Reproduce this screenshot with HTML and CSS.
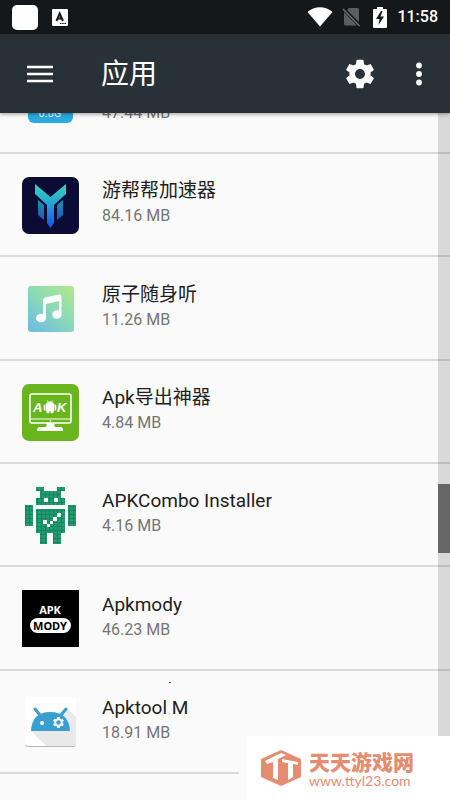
FILE: index.html
```
<!DOCTYPE html>
<html lang="zh-CN">
<head>
    <meta charset="UTF-8">
    <meta name="viewport" content="width=device-width, initial-scale=1.0">
    <title>应用</title>
    <link rel="stylesheet" href="styles.css">
</head>
<body>

    <div class="status-bar">
        <div class="notifications">
            <span class="blank-notice"></span>
            <svg width="16" height="17" viewBox="0 0 16 17">
                <rect width="16" height="17" rx="1" fill="#fff"/>
                <path d="M4.5 12L7.7 4.5L11 12M5.5 9.5H10" fill="none" stroke="#15191c" stroke-width="2"/>
                <path d="M8 14.5H14" stroke="#15191c" stroke-dasharray="1.5 .7"/>
            </svg>
        </div>
        <div class="indicators">
            <svg width="26" height="20" viewBox="0 0 26 20">
                <path d="M0.5 5C7-1.3 19-1.3 25.5 5L13 19.5Z" fill="#fff"/>
            </svg>
            <svg class="no-sim" width="18" height="20" viewBox="0 0 18 20">
                <path d="M7 1H15.5Q17 1 17 2.500V15L5 3ZM2 5L15 18.500H3.500Q2 18.500 2 17Z" fill="#5b5e60"/>
                <path d="M1 2L17.500 19" stroke="#6c6f71" stroke-width="1.5"/>
            </svg>
            <svg class="battery" width="14" height="21" viewBox="0 0 14 21">
                <path d="M4 0H10V2H13Q14 2 14 3V20Q14 21 13 21H1Q0 21 0 20V3Q0 2 1 2H4Z" fill="#fff"/>
                <path d="M8 4L3 12H6.500L5.500 18L11 9.500H7.500L9.500 4Z" fill="#15191c"/>
            </svg>
            <span class="clock">11:58</span>
        </div>
    </div>

    <header class="toolbar">
        <button class="icon-btn" aria-label="菜单">
            <svg width="26" height="18" viewBox="0 0 26 18">
                <path d="M0 2H26M0 9H26M0 16H26" stroke="#fff" stroke-width="2.600"/>
            </svg>
        </button>
        <h1>应用</h1>
        <button class="icon-btn settings-btn" aria-label="设置">
            <svg width="34" height="34" viewBox="0 0 24 24">
                <path fill="#fff" d="M19.430 12.980c.04-.32.07-.64.07-.98s-.03-.66-.07-.98l2.110-1.650c.19-.15.24-.42.12-.64l-2-3.460c-.12-.22-.39-.3-.61-.22l-2.490 1c-.52-.4-1.080-.73-1.690-.98l-.38-2.650C14.460 2.180 14.250 2 14 2h-4c-.25 0-.46.18-.49.42l-.38 2.650c-.61.25-1.170.59-1.690.98l-2.490-1c-.23-.09-.49 0-.61.22l-2 3.460c-.13.22-.07.49.12.64l2.110 1.650c-.04.32-.07.65-.07.98s.03.66.07.98l-2.110 1.650c-.19.15-.24.42-.12.64l2 3.460c.12.22.39.3.61.22l2.490-1c.52.4 1.080.73 1.690.98l.38 2.650c.03.24.24.42.49.42h4c.25 0 .46-.18.49-.42l.38-2.650c.61-.25 1.170-.59 1.690-.98l2.490 1c.23.09.49 0 .61-.22l2-3.460c.12-.22.07-.49-.12-.64l-2.110-1.650zM12 15.500c-1.930 0-3.500-1.570-3.500-3.500s1.570-3.500 3.500-3.500 3.500 1.570 3.500 3.500-1.570 3.500-3.500 3.500z"/>
            </svg>
        </button>
        <button class="icon-btn" aria-label="更多">
            <svg width="6" height="24" viewBox="0 0 6 24">
                <g fill="#fff"><circle cx="3" cy="3.500" r="2.900"/><circle cx="3" cy="12" r="2.900"/><circle cx="3" cy="20.500" r="2.900"/></g>
            </svg>
        </button>
    </header>

    <main class="content">
        <ul class="app-list">
            <li class="app">
                <svg class="app-icon" viewBox="0 0 57 57">
                    <rect x="6" y="4" width="45" height="45" rx="6" fill="#29aae3"/>
                    <text x="28" y="43" text-anchor="middle" class="speed-text">0.0G</text>
                </svg>
                <div class="app-info">
                    <div class="app-name">&nbsp;</div>
                    <div class="app-size">47.44 MB</div>
                </div>
            </li>
            <li class="app">
                <svg class="app-icon" viewBox="0 0 57 57">
                    <defs>
                        <linearGradient id="boost" x1="0" y1="7" x2="0" y2="51" gradientUnits="userSpaceOnUse">
                            <stop offset="0" stop-color="#35d5bc"/>
                            <stop offset=".5" stop-color="#249dd5"/>
                            <stop offset="1" stop-color="#174ee0"/>
                        </linearGradient>
                    </defs>
                    <rect width="57" height="57" rx="7" fill="#0c0b35"/>
                    <g fill="url(#boost)">
                        <path d="M13 7L28.500 20L44 7V17L32 28V46L28.500 51L25 46V28L13 17Z"/>
                        <path d="M16 23L22 28V43L16 38ZM41 23L35 28V43L41 38Z" opacity=".8"/>
                    </g>
                </svg>
                <div class="app-info">
                    <div class="app-name">游帮帮加速器</div>
                    <div class="app-size">84.16 MB</div>
                </div>
            </li>
            <li class="app">
                <svg class="app-icon" viewBox="0 0 57 57">
                    <defs>
                        <linearGradient id="music" x1="1" y1="0" x2=".2" y2="1">
                            <stop offset="0" stop-color="#b5e88d"/>
                            <stop offset=".5" stop-color="#8bdbb4"/>
                            <stop offset="1" stop-color="#72bfe2"/>
                        </linearGradient>
                    </defs>
                    <rect x="6" y="6" width="46" height="46" rx="3" fill="url(#music)"/>
                    <g fill="#fff">
                        <path d="M21 20Q21 18 23 17.500L37 14.500Q39.500 14 39.500 16V34H37V21L24 24V38H21Z"/>
                        <ellipse cx="19" cy="38" rx="5" ry="4.300"/>
                        <ellipse cx="35" cy="34.500" rx="4.800" ry="4.200"/>
                    </g>
                </svg>
                <div class="app-info">
                    <div class="app-name">原子随身听</div>
                    <div class="app-size">11.26 MB</div>
                </div>
            </li>
            <li class="app">
                <svg class="app-icon" viewBox="0 0 57 57">
                    <rect width="57" height="57" rx="7" fill="#68b51c"/>
                    <rect x="8" y="10" width="41" height="29" rx="2" fill="none" stroke="#fff" stroke-width="1.500"/>
                    <path d="M8 35H49" stroke="#fff"/>
                    <path d="M25 39H32L33 43H39Q41 43 41 47H15Q15 43 18 43H24Z" fill="#fff"/>
                    <circle cx="28.500" cy="37" r=".8" fill="#fff"/>
                    <text x="11" y="28" class="export-text">A</text>
                    <text x="35" y="28" class="export-text">K</text>
                    <path d="M24 20Q28 15 32 20V27H31V29H29V27H27V29H25V27H24ZM22 21H23V26H22ZM33 21H34V26H33ZM25 16L26 18M31 16L30 18" fill="#fff" stroke="#fff" stroke-width=".6"/>
                </svg>
                <div class="app-info">
                    <div class="app-name">Apk导出神器</div>
                    <div class="app-size">4.84 MB</div>
                </div>
            </li>
            <li class="app">
                <svg class="app-icon" viewBox="0 0 57 57">
                    <defs>
                        <pattern id="pixels" x="0" y="0" width="4" height="4" patternUnits="userSpaceOnUse">
                            <rect width="4" height="4" fill="#11865c"/>
                            <rect width="3" height="3" fill="#259b71"/>
                        </pattern>
                    </defs>
                    <path fill="url(#pixels)" d="M14 0H22V4H35V0H43V4H39V11H43V18H14V11H18V4H14ZM3 18H11V39H3ZM46 18H54V39H46ZM14 22H43V46H39V57H31V46H25V57H18V46H14Z"/>
                    <path fill="#fff" d="M22 11H26V15H22ZM32 11H36V15H32ZM35 26H39V30H35ZM31 30H35V34H31ZM28 34H31V37H28ZM21 33H25V37H21ZM25 37H28V40H25Z"/>
                </svg>
                <div class="app-info">
                    <div class="app-name">APKCombo Installer</div>
                    <div class="app-size">4.16 MB</div>
                </div>
            </li>
            <li class="app">
                <svg class="app-icon" viewBox="0 0 57 57">
                    <rect width="57" height="57" fill="#000"/>
                    <text x="28" y="24" text-anchor="middle" class="mody-text" fill="#fff">APK</text>
                    <rect x="8" y="28" width="41" height="15" rx="7.500" fill="#fff"/>
                    <text x="28" y="40" text-anchor="middle" class="mody-text" fill="#000">MODY</text>
                </svg>
                <div class="app-info">
                    <div class="app-name">Apkmody</div>
                    <div class="app-size">46.23 MB</div>
                </div>
            </li>
            <li class="app">
                <svg class="app-icon" viewBox="0 0 57 57">
                    <rect x="3" y="4" width="51" height="49" rx="3" fill="#b9b9b9"/>
                    <rect x="3" y="3" width="51" height="49" rx="3" fill="#fff"/>
                    <path d="M9 37L24 52H51Q54 52 54 49V23L45 14Z" fill="#e9e9e9"/>
                    <path d="M9 37Q10 18 28 18Q47 18 48 37Z" fill="#389fd3"/>
                    <path d="M13 15L18 21M44 15L39 21" stroke="#389fd3" stroke-width="3" stroke-linecap="round"/>
                    <circle cx="20" cy="29" r="2" fill="#fff"/>
                    <circle cx="36.500" cy="28.500" r="3.300" fill="none" stroke="#fff" stroke-width="2"/>
                    <path d="M36.500 23V25M36.500 32V34M31.700 25.800L33.500 26.800M39.500 30.200L41.300 31.200M31.700 31.200L33.500 30.200M39.500 26.800L41.300 25.800" stroke="#fff" stroke-width="2.500"/>
                </svg>
                <div class="app-info">
                    <div class="app-name">Apktool M</div>
                    <div class="app-size">18.91 MB</div>
                </div>
            </li>
        </ul>
        <div class="scrollbar"><div class="thumb"></div></div>
        <span class="speck"></span>
    </main>

    <div class="watermark">
        <svg width="40" height="36" viewBox="0 0 40 36">
            <path d="M20 0L40 9V27L20 36L0 27V9Z" fill="#e68c70"/>
            <path d="M4 11L20 3L25 5L17 9V30L12 28V12L6 14Z" fill="#fff"/>
            <path d="M21 9L37 12V15L32 14V27L27 30V13L21 12Z" fill="#fff"/>
        </svg>
        <div class="site">
            <div class="site-name">天天游戏网</div>
            <div class="site-url">www.ttyl23.com</div>
        </div>
    </div>

</body>
</html>
```
FILE: styles.css
```
* {
    box-sizing: border-box;
}
body {
    font-family: Roboto, "Noto Sans CJK SC", sans-serif;
    background-color: #fafafa;
    color: #212121;
    margin: 0;
    height: 100vh;
    display: flex;
    flex-direction: column;
    overflow: hidden;
}
svg {
    display: block;
    flex-shrink: 0;
}
.status-bar {
    height: 34px;
    flex-shrink: 0;
    padding: 0 12px;
    display: flex;
    justify-content: space-between;
    align-items: center;
    background-color: #14181b;
}
.notifications, .indicators {
    display: flex;
    align-items: center;
}
.notifications {
    gap: 14px;
}
.blank-notice {
    width: 26px;
    height: 25px;
    border-radius: 5px;
    background-color: #fff;
}
.indicators {
    gap: 9px;
}
.battery {
    margin: 0 1px 0 4px;
}
.clock {
    color: #fff;
    font-size: 16px;
    font-weight: 500;
    line-height: 24px;
}
.toolbar {
    position: relative;
    z-index: 1;
    height: 79px;
    flex-shrink: 0;
    padding: 0 20px 0 19px;
    display: flex;
    align-items: center;
    background-color: #293138;
    box-shadow: 0 1px 4px rgba(0, 0, 0, 0.4);
}
.toolbar h1 {
    flex: 1;
    margin: 0 0 0 40px;
    padding-top: 2px;
    color: #fff;
    font-size: 28px;
    font-weight: 400;
    line-height: 40px;
}
.icon-btn {
    padding: 8px;
    border: none;
    background: none;
    cursor: pointer;
}
.settings-btn {
    margin-right: 23px;
}
.content {
    position: relative;
    flex: 1;
    min-height: 0;
    overflow: hidden;
}
/* list is scrolled part way past its first row */
.app-list {
    list-style: none;
    margin: -62px 0 0;
    padding: 0;
}
.app {
    height: 103px;
    padding: 1px 22px 0;
    display: flex;
    align-items: center;
    gap: 23px;
    border-bottom: 2px solid #dadada;
}
.app:nth-child(3n) {
    height: 104px;
}
.app-icon {
    width: 57px;
    height: 57px;
}
.app-info {
    padding-bottom: 4px;
}
.app-name {
    font-size: 19px;
    line-height: 26px;
}
.app-size {
    color: #757575;
    font-size: 16px;
    line-height: 24px;
}
.speed-text {
    font-size: 11px;
    fill: #fff;
}
.export-text {
    font-family: "Liberation Sans", sans-serif;
    font-size: 13px;
    font-weight: bold;
    font-style: italic;
    fill: #fff;
}
.mody-text {
    font-family: "Noto Sans", sans-serif;
    font-size: 11px;
    font-weight: bold;
}
.scrollbar {
    position: absolute;
    top: 0;
    right: 0;
    bottom: 0;
    width: 12px;
    background-color: rgba(0, 0, 0, 0.13);
}
.thumb {
    height: 10%;
    margin-top: 371px;
    background-color: #666;
}
.speck {
    position: absolute;
    left: 169px;
    top: 569px;
    width: 2px;
    height: 1px;
    background-color: #555;
}
.watermark {
    position: absolute;
    right: 0;
    bottom: 0;
    height: 64px;
    padding: 0 36px 0 15px;
    display: flex;
    align-items: center;
    gap: 8px;
    border-left: 7px solid #fafafa;
    background-color: #fff;
    color: #e68c70;
}
.site {
    padding-top: 2px;
}
.site-name {
    font-family: "Noto Sans CJK SC", sans-serif;
    font-size: 21px;
    font-weight: 900;
    line-height: 24px;
}
.site-url {
    font-family: Lato, sans-serif;
    font-size: 14px;
    line-height: 16px;
}
```
